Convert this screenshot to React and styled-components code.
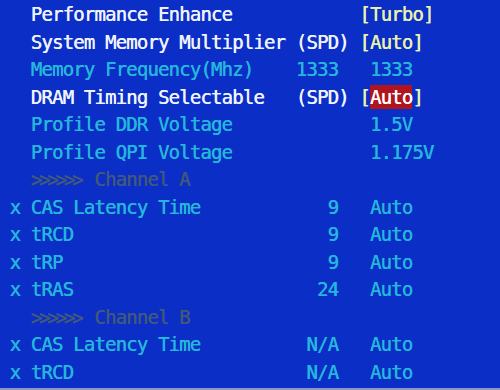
import React from 'react'
import styled, { createGlobalStyle } from 'styled-components'

const Global = createGlobalStyle`
  html, body { margin: 0; padding: 0; background: #0b2ec6; }
  body { width: 500px; height: 390px; overflow: hidden; }
`

// one character cell of the BIOS text grid
const CELL = 10.6

const colors = {
  white: '#eef3ff',
  yellow: '#e9f0ad',
  cyan: '#25b6dc',
  gray: '#40587c',
}

const Screen = styled.div`
  box-sizing: border-box;
  width: 500px;
  height: 390px;
  padding: 1px 0 0 9.5px;
  background: #0b2ec6;
  font-family: "DejaVu Sans Mono", "Liberation Mono", monospace;
  font-size: 19px;
  letter-spacing: -0.84px;
  text-shadow: 0.4px 0 0;
  border-bottom: 2px solid #8c97c8;
`

const Row = styled.div`
  display: grid;
  grid-template-columns: ${2 * CELL}px ${25 * CELL}px ${6 * CELL}px auto;
  height: 27.5px;
  line-height: 27.5px;
  white-space: pre;
  color: ${p => colors[p.$tone || 'cyan']};
`

const Marker = styled.span``

const Label = styled.span``

const Mid = styled.span`
  text-align: ${p => (p.$right ? 'right' : 'left')};
  padding-right: ${p => (p.$right ? 2 * CELL : 0)}px;
`

const Value = styled.span`
  padding-left: ${p => (p.$bracket ? 0 : CELL)}px;
`

const Bracket = styled.span`
  color: ${colors.yellow};
`

const Selected = styled.span`
  display: inline-block;
  height: 24px;
  line-height: 24px;
  background: #b0141e;
  color: #ffffff;
`

const Chevrons = styled.span`
  display: inline-block;
  vertical-align: top;
  width: ${6 * CELL}px;
  overflow: hidden;
  letter-spacing: -3.2px;
  transform: scaleY(1.15);
`

const Channel = ({ name }) => (
  <Row $tone="gray">
    <Marker />
    <Label>
      <Chevrons>{'>>>>>>'}</Chevrons>Channel {name}
    </Label>
  </Row>
)

const Timing = ({ label, value }) => (
  <Row>
    <Marker>x</Marker>
    <Label>{label}</Label>
    <Mid $right>{value}</Mid>
    <Value>Auto</Value>
  </Row>
)

export default function App() {
  return (
    <>
      <Global />
      <Screen>
        <Row $tone="white">
          <Marker />
          <Label>Performance Enhance</Label>
          <Mid />
          <Value $bracket><Bracket>[Turbo]</Bracket></Value>
        </Row>
        <Row $tone="white">
          <Marker />
          <Label>System Memory Multiplier</Label>
          <Mid>(SPD)</Mid>
          <Value $bracket><Bracket>[Auto]</Bracket></Value>
        </Row>
        <Row>
          <Marker />
          <Label>Memory Frequency(Mhz)</Label>
          <Mid>1333</Mid>
          <Value>1333</Value>
        </Row>
        <Row $tone="white">
          <Marker />
          <Label>DRAM Timing Selectable</Label>
          <Mid>(SPD)</Mid>
          <Value $bracket>
            <Bracket>[</Bracket><Selected>Auto</Selected><Bracket>]</Bracket>
          </Value>
        </Row>
        <Row>
          <Marker />
          <Label>Profile DDR Voltage</Label>
          <Mid />
          <Value>1.5V</Value>
        </Row>
        <Row>
          <Marker />
          <Label>Profile QPI Voltage</Label>
          <Mid />
          <Value>1.175V</Value>
        </Row>
        <Channel name="A" />
        <Timing label="CAS Latency Time" value="9" />
        <Timing label="tRCD" value="9" />
        <Timing label="tRP" value="9" />
        <Timing label="tRAS" value="24" />
        <Channel name="B" />
        <Timing label="CAS Latency Time" value="N/A" />
        <Timing label="tRCD" value="N/A" />
      </Screen>
    </>
  )
}
